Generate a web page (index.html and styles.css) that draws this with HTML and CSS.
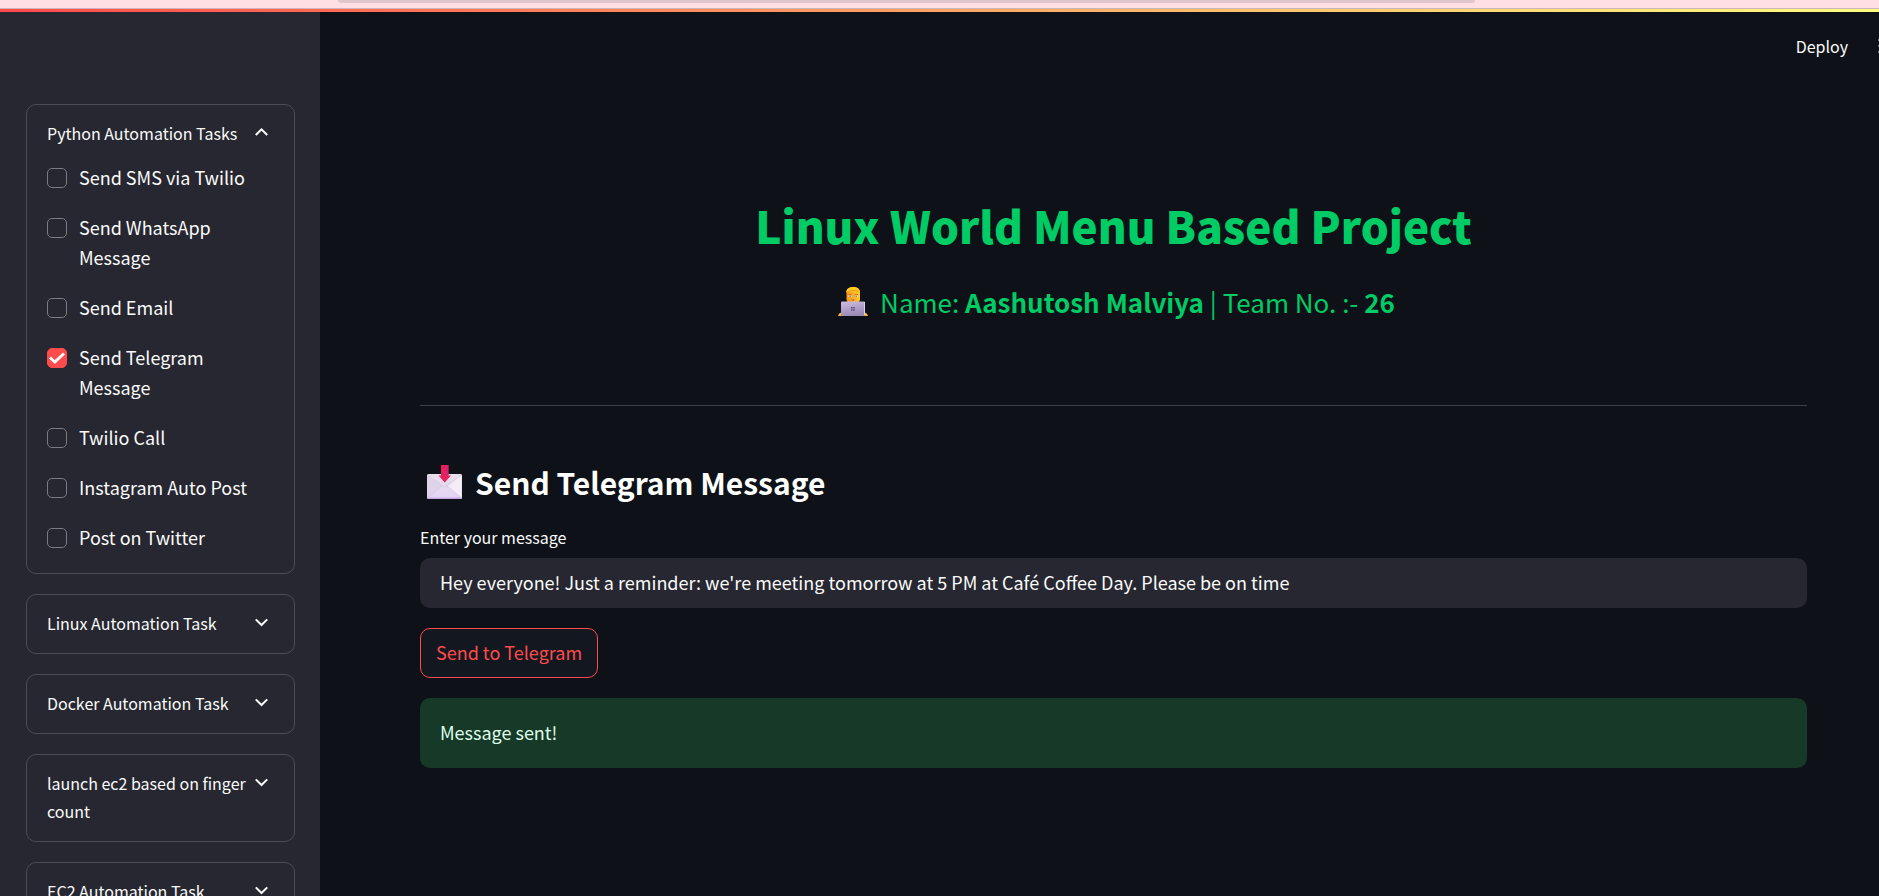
FILE: index.html
```html
<!DOCTYPE html>
<html lang="en">
<head>
<meta charset="utf-8">
<title>Linux World Menu Based Project</title>
<link rel="stylesheet" href="styles.css">
</head>
<body>
<div class="browser-edge"><div class="address-bar"></div></div>
<div class="decoration"></div>
<div class="app">
  <aside class="sidebar">
    <details class="expander" open>
      <summary><span>Python Automation Tasks</span><svg class="chevron" viewBox="0 0 24 24" aria-hidden="true"><path d="M6.500 14.500 12 9l5.500 5.500"/></svg></summary>
      <div class="options">
        <label class="option"><input type="checkbox"><span>Send SMS via Twilio</span></label>
        <label class="option"><input type="checkbox"><span>Send WhatsApp Message</span></label>
        <label class="option"><input type="checkbox"><span>Send Email</span></label>
        <label class="option"><input type="checkbox" checked><svg class="tick" viewBox="0 0 20 20" aria-hidden="true"><path d="M3 9.500 7.800 14 17 5.500"/></svg><span>Send Telegram Message</span></label>
        <label class="option"><input type="checkbox"><span>Twilio Call</span></label>
        <label class="option"><input type="checkbox"><span>Instagram Auto Post</span></label>
        <label class="option"><input type="checkbox"><span>Post on Twitter</span></label>
      </div>
    </details>
    <details class="expander">
      <summary><span>Linux Automation Task</span><svg class="chevron" viewBox="0 0 24 24" aria-hidden="true"><path d="M6.500 9 12 14.500 17.500 9"/></svg></summary>
    </details>
    <details class="expander">
      <summary><span>Docker Automation Task</span><svg class="chevron" viewBox="0 0 24 24" aria-hidden="true"><path d="M6.500 9 12 14.500 17.500 9"/></svg></summary>
    </details>
    <details class="expander">
      <summary><span>launch ec2 based on finger count</span><svg class="chevron" viewBox="0 0 24 24" aria-hidden="true"><path d="M6.500 9 12 14.500 17.500 9"/></svg></summary>
    </details>
    <details class="expander">
      <summary><span>EC2 Automation Task</span><svg class="chevron" viewBox="0 0 24 24" aria-hidden="true"><path d="M6.500 9 12 14.500 17.500 9"/></svg></summary>
    </details>
  </aside>
  <div class="page">
    <header class="toolbar">
      <button class="deploy" type="button">Deploy</button>
      <button class="menu" type="button" aria-label="Main menu"><svg viewBox="0 0 4 16" aria-hidden="true"><circle cx="2" cy="2" r="1.500"/><circle cx="2" cy="8" r="1.500"/><circle cx="2" cy="14" r="1.500"/></svg></button>
    </header>
    <main class="content">
      <h1>Linux World Menu Based Project</h1>
      <p class="byline">
        <svg class="person" viewBox="0 0 30 30" aria-hidden="true">
          <defs>
            <linearGradient id="skin" x1="0" x2="1"><stop offset="0" stop-color="#f7941c"/><stop offset="1" stop-color="#ffc926"/></linearGradient>
            <linearGradient id="laptop" x1="0" y1="0" x2="0.300" y2="1"><stop offset="0" stop-color="#cdbbe2"/><stop offset="1" stop-color="#9a8bb5"/></linearGradient>
          </defs>
          <path fill="url(#skin)" d="M8.500 6C8.500 2 11 0 15 0s7 2 7 6v6c0 3-3 5-7 5s-6.500-2-6.500-5z"/>
          <path fill="#ffc91d" d="M8 6C8 2 11 0 15.500 0 20 0 22.500 2.500 22 7l-1-2.500q-6 1.500-12 0z"/>
          <path fill="#d98a1e" d="M10.500 3.800q5-1.200 10 0v.7q-5-1-10 0z"/>
          <path fill="#ec6d24" d="M10.500 7h3v1h-3zm6.500 0h3v1h-3z"/>
          <path fill="#f3e3da" d="M10.500 8.500h3v1.500h-3zm6.500 0h3v1.500h-3z"/>
          <path fill="#60708f" d="M11.500 8.500h1.300v1.500h-1.300zm6 0h1.300v1.500h-1.300z"/>
          <path fill="#d9433d" d="M13.200 12.500h3.600q-1.800 2.500-3.600 0z"/>
          <path fill="#f9bd20" d="M3 25.500Q.5 26 0 29h6zm24 0q2.500.5 3 3.500h-6z"/>
          <rect x="3" y="14.500" width="24" height="14.500" rx="1" fill="url(#laptop)"/>
          <path fill="#ded1eb" d="M26 15h1v13h-1z"/>
          <path fill="#594777" d="M13 20h1.500v1.500H13zm2.200 0h1.500v1.500h-1.500zM13 22.200h1.500v1.500H13zm2.200 0h1.500v1.500h-1.500z"/>
        </svg>
        <span>Name: <strong>Aashutosh Malviya</strong> | Team No. :- <strong>26</strong></span>
      </p>
      <hr>
      <h2>
        <svg class="envelope" viewBox="0 0 36 34" aria-hidden="true">
          <defs><linearGradient id="paper" x1="0" y1="0" x2="0" y2="1"><stop offset="0" stop-color="#e9e0ea"/><stop offset="1" stop-color="#e2d4f5"/></linearGradient></defs>
          <rect x="0" y="9" width="35" height="25" rx="1.500" fill="url(#paper)"/>
          <path fill="#f4edf8" d="m34.500 10-14 11.500L34.500 33z"/>
          <path fill="#dcd0e4" d="M.5 10 15 21 .5 33z" opacity=".7"/>
          <path fill="none" stroke="#d3c8de" stroke-width=".8" d="M.5 10 17.500 22 34.500 10M.5 33l15-12.500M34.500 33l-15-12.500"/>
          <path fill="#c8a9e5" d="M.5 32.500h34V34H.5z"/>
          <path fill="#e5205c" d="M14 0h7.500v10.500H24L17.700 17.500 11.500 10.500H14z"/>
          <path fill="#c52a83" d="M19.500 0h2v10.500h-2z" opacity=".6"/>
        </svg>
        <span>Send Telegram Message</span>
      </h2>
      <form class="message-form">
        <label for="message">Enter your message</label>
        <input class="message" id="message" type="text" value="Hey everyone! Just a reminder: we're meeting tomorrow at 5 PM at Café Coffee Day. Please be on time">
        <button class="send" type="button">Send to Telegram</button>
      </form>
      <div class="success" role="status">Message sent!</div>
    </main>
  </div>
</div>
</body>
</html>
```

FILE: styles.css
```css
* { box-sizing: border-box; }

body {
  margin: 0;
  height: 100vh;
  display: flex;
  flex-direction: column;
  overflow: hidden;
  background: #0e1117;
  color: #fafafa;
  font-family: "Noto Sans CJK SC", "Noto Sans", sans-serif;
  font-size: 18px;
  line-height: 30px;
}

button, input { font: inherit; color: inherit; }

.browser-edge {
  flex: none;
  height: 9px;
  padding: 0 21.500% 0 18%;
  background: #ffdfe4;
  border-bottom: 1px solid #cbb6bc;
}
.address-bar {
  height: 3px;
  background: #dfc6ca;
  border-radius: 0 0 8px 8px;
}
.decoration {
  flex: none;
  height: 3px;
  background: linear-gradient(90deg, #ff4b4b, #fffd80);
}

.app {
  flex: 1;
  min-height: 0;
  display: flex;
}

.sidebar {
  flex: none;
  width: 320px;
  padding: 92px 25px 0 26px;
  display: flex;
  flex-direction: column;
  gap: 20px;
  overflow: hidden;
  background: #262730;
}
.expander {
  flex: none;
  border: 1px solid #4b4c54;
  border-radius: 10px;
}
.expander summary {
  display: flex;
  justify-content: space-between;
  align-items: flex-start;
  padding: 14px 20px 16px;
  font-size: 16px;
  line-height: 28px;
  list-style: none;
  cursor: pointer;
}
.chevron {
  flex: none;
  width: 25px;
  height: 25px;
  margin-top: 1px;
  fill: none;
  stroke: #fafafa;
  stroke-width: 2;
}
.options {
  display: flex;
  flex-direction: column;
  gap: 20px;
  margin-top: -1px;
  padding: 0 20px 21px;
}
.option {
  position: relative;
  display: flex;
  align-items: flex-start;
  gap: 12px;
}
.option input {
  flex: none;
  appearance: none;
  width: 20px;
  height: 20px;
  margin: 6px 0 0;
  border: 1px solid #7b7c82;
  border-radius: 5px;
}
.option input:checked {
  background: #ff4b4b;
  border-color: #ff4b4b;
}
.tick {
  position: absolute;
  left: 0;
  top: 6px;
  width: 20px;
  height: 20px;
  fill: none;
  stroke: #fafafa;
  stroke-width: 3;
}

.page {
  flex: 1;
  min-width: 0;
  overflow: hidden;
}
.toolbar {
  display: flex;
  justify-content: flex-end;
  align-items: center;
  gap: 30px;
  height: 68px;
  margin-right: -3px;
}
.toolbar button {
  flex: none;
  padding: 0;
  border: 0;
  background: none;
  font-size: 16px;
}
.menu {
  width: 4px;
  height: 16px;
}
.menu svg {
  display: block;
  width: 4px;
  height: 16px;
  fill: #fafafa;
}

.content {
  padding: 112px 72px 0 100px;
}
h1 {
  margin: 0;
  color: #00cc66;
  font-size: 44px;
  font-weight: 900;
  line-height: 66px;
  text-align: center;
}
.byline {
  display: flex;
  justify-content: center;
  align-items: center;
  gap: 12px;
  margin: 21px 0 0;
  padding-left: 6px;
  color: #00cc66;
  font-size: 26px;
  line-height: 46px;
}
.person {
  width: 30px;
  height: 30px;
}
hr {
  height: 1px;
  margin: 80px 0 0;
  border: 0;
  background: #3e4046;
}
h2 {
  display: flex;
  align-items: center;
  gap: 12px;
  margin: 55px 0 0;
  padding-left: 7px;
  color: #ffffff;
  font-size: 30px;
  font-weight: 600;
  line-height: 42px;
}
.envelope {
  width: 36px;
  height: 34px;
}
.message-form {
  display: flex;
  flex-direction: column;
  align-items: flex-start;
  margin-top: 20px;
}
.message-form label {
  margin-bottom: 7px;
  font-size: 16px;
  line-height: 28px;
}
.message {
  width: 100%;
  height: 50px;
  padding: 0 20px 2px;
  border: 0;
  border-radius: 10px;
  background: #262730;
}
.send {
  margin: 20px 0;
  padding: 8px 15px 10px;
  border: 1px solid #ff4b4b;
  border-radius: 10px;
  background: #131720;
  color: #ff4b4b;
}
.success {
  padding: 19px 20px 21px;
  border-radius: 10px;
  background: #173928;
  color: #dffde9;
}
```
